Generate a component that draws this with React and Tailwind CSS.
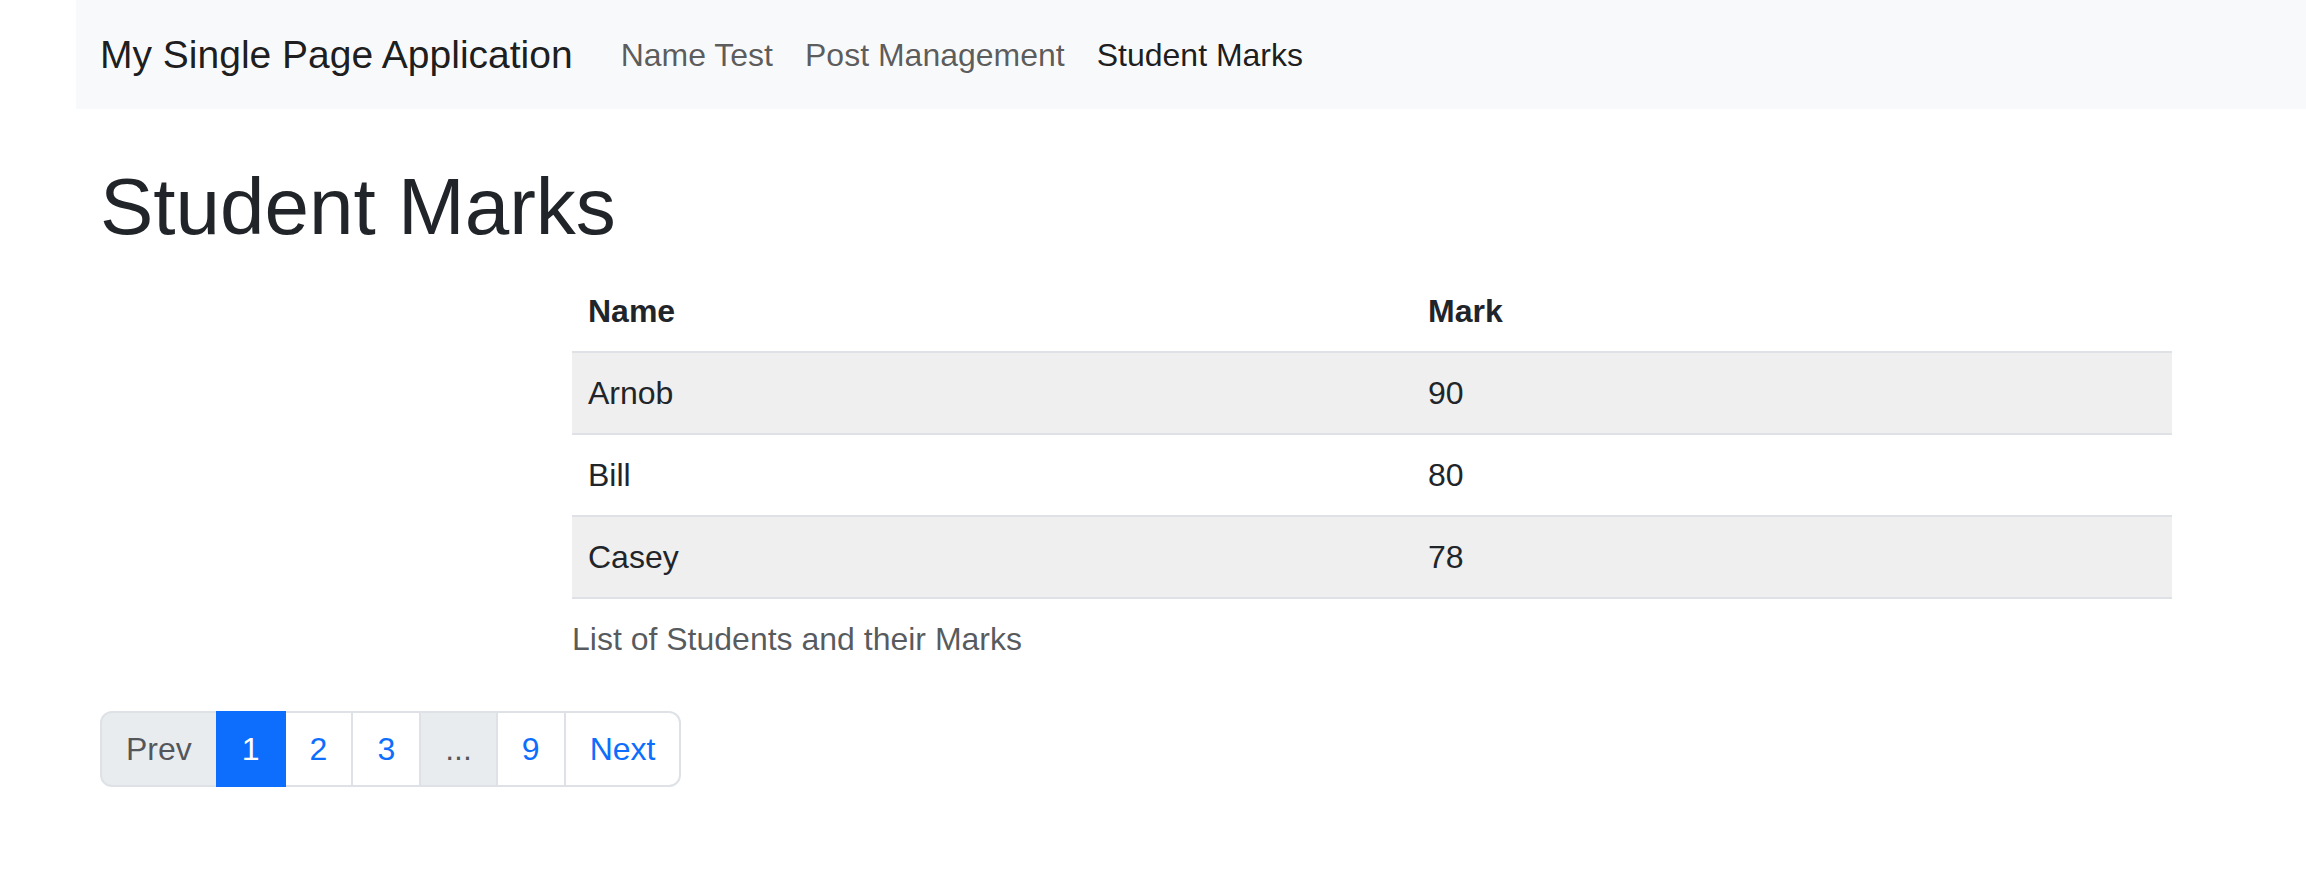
import React from 'react';

const students = [
  { name: 'Arnob', mark: 90 },
  { name: 'Bill', mark: 80 },
  { name: 'Casey', mark: 78 },
];

const NavBar = () => (
  <nav className="h-[109px] bg-[#f8f9fa] flex items-center px-6">
    <a href="#" className="text-[39px] leading-[60px] text-black/90 mr-8">My Single Page Application</a>
    <a href="#" className="px-4 text-[32px] leading-[48px] text-black/65">Name Test</a>
    <a href="#" className="px-4 text-[32px] leading-[48px] text-black/65">Post Management</a>
    <a href="#" className="px-4 text-[32px] leading-[48px] text-black/90">Student Marks</a>
  </nav>
);

const Pagination = () => {
  const base = 'block -ml-[2px] first:ml-0 border-2 px-6 py-3 text-[32px] leading-[48px]';
  return (
    <ul className="flex">
      <li className={`${base} rounded-l-[12px] bg-[#e9ecef] border-[#dee2e6] text-[#212529]/75`}>Prev</li>
      <li className={`${base} relative z-10 bg-[#0d6efd] border-[#0d6efd] text-white`}>1</li>
      <li className={`${base} bg-white border-[#dee2e6] text-[#0d6efd]`}>2</li>
      <li className={`${base} bg-white border-[#dee2e6] text-[#0d6efd]`}>3</li>
      <li className={`${base} bg-[#e9ecef] border-[#dee2e6] text-[#212529]/75`}>...</li>
      <li className={`${base} bg-white border-[#dee2e6] text-[#0d6efd]`}>9</li>
      <li className={`${base} rounded-r-[12px] bg-white border-[#dee2e6] text-[#0d6efd]`}>Next</li>
    </ul>
  );
};

export default function App() {
  return (
    <div className="ml-[76px] min-h-screen bg-white text-[#212529] font-['Liberation_Sans',Arial,sans-serif]">
      <NavBar />
      <div className="px-6">
        <h1 className="mt-[50px] mb-4 text-[80px] leading-[96px] font-medium">Student Marks</h1>
        <table className="ml-[472px] w-[1600px] mb-8 border-collapse text-[32px] leading-[48px]">
          <caption className="caption-bottom text-left py-4 text-[#212529]/75">List of Students and their Marks</caption>
          <thead>
            <tr className="border-b-2 border-[#dee2e6]">
              <th className="w-[840px] px-4 py-4 text-left font-bold">Name</th>
              <th className="px-4 py-4 text-left font-bold">Mark</th>
            </tr>
          </thead>
          <tbody>
            {students.map((s, i) => (
              <tr key={s.name} className={`border-b-2 border-[#dee2e6] ${i % 2 === 0 ? 'bg-[#efefef]' : 'bg-white'}`}>
                <td className="px-4 py-4">{s.name}</td>
                <td className="px-4 py-4">{s.mark}</td>
              </tr>
            ))}
          </tbody>
        </table>
        <Pagination />
      </div>
    </div>
  );
}
